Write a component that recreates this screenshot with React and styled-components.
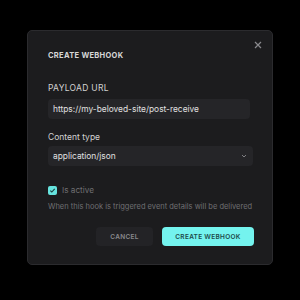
import styled, { createGlobalStyle } from "styled-components";

const Global = createGlobalStyle`
  html, body { margin: 0; padding: 0; background: #000; }
  body { width: 300px; height: 300px; font-family: Inter, "Noto Sans", sans-serif; }
`;

const Screen = styled.div`
  width: 300px;
  height: 300px;
  display: flex;
  justify-content: center;
  padding-top: 30px;
  box-sizing: border-box;
`;

const Dialog = styled.div`
  position: relative;
  width: 246px;
  height: 235px;
  box-sizing: border-box;
  background: #1c1c1e;
  border: 1px solid #2b2b2e;
  border-radius: 5px;
  padding: 20px 20px 0 20px;
  display: flex;
  flex-direction: column;
`;

const Close = styled.button`
  position: absolute;
  top: 9px;
  right: 9px;
  width: 10px;
  height: 10px;
  padding: 0;
  border: none;
  background: none;
  display: flex;
  align-items: center;
  justify-content: center;
`;

const Title = styled.h2`
  margin: 0;
  font-size: 7.5px;
  font-weight: 700;
  letter-spacing: 0.3px;
  color: #d6d6d6;
  text-transform: uppercase;
  line-height: 10px;
`;

const Label = styled.div`
  margin-top: ${(p) => p.$mt}px;
  font-size: 8.5px;
  letter-spacing: ${(p) => (p.$upper ? "0.3px" : "0")};
  color: #d2d2d2;
  line-height: 11px;
`;

const Field = styled.div`
  margin-top: ${(p) => p.$mt}px;
  width: ${(p) => p.$w}px;
  height: 20px;
  box-sizing: border-box;
  background: #252528;
  border-radius: 4px;
  padding: 0 6px 0 5px;
  display: flex;
  align-items: center;
  justify-content: space-between;
  font-size: 8.4px;
  color: #e0e0e0;
`;

const CheckRow = styled.div`
  margin-top: 19px;
  display: flex;
  align-items: center;
  gap: 5px;
  font-size: 8.2px;
  line-height: 11px;
  color: #6f6f72;
`;

const Box = styled.span`
  width: 9px;
  height: 9px;
  border-radius: 2px;
  background: #66e3de;
  display: flex;
  align-items: center;
  justify-content: center;
`;

const Hint = styled.p`
  margin: 5px 0 0;
  font-size: 7.5px;
  color: #6f6f72;
  line-height: 11px;
  white-space: nowrap;
`;

const Actions = styled.div`
  margin-top: 15px;
  width: 206px;
  display: flex;
  justify-content: flex-end;
  gap: 9px;
`;

const Button = styled.button`
  height: 19px;
  width: ${(p) => p.$w}px;
  border: none;
  border-radius: 4px;
  font-family: inherit;
  font-size: 6.5px;
  font-weight: 600;
  letter-spacing: 0.3px;
  text-transform: uppercase;
  background: ${(p) => (p.$primary ? "#74f3ee" : "#232326")};
  color: ${(p) => (p.$primary ? "#1c4a4a" : "#8a8a8d")};
  padding: 0;
`;

export default function App() {
  return (
    <>
      <Global />
      <Screen>
        <Dialog>
          <Close>
            <svg width="8" height="8" viewBox="0 0 8 8">
              <path d="M1 1L7 7M7 1L1 7" stroke="#8a8a8d" strokeWidth="1.2" />
            </svg>
          </Close>
          <Title>Create webhook</Title>
          <Label $upper $mt={22}>PAYLOAD URL</Label>
          <Field $mt={5} $w={202}>https://my-beloved-site/post-receive</Field>
          <Label $mt={13}>Content type</Label>
          <Field $mt={3} $w={205}>
            application/json
            <svg width="6" height="4" viewBox="0 0 6 4">
              <path d="M1 1L3 3L5 1" stroke="#8a8a8d" strokeWidth="0.9" fill="none" />
            </svg>
          </Field>
          <CheckRow>
            <Box>
              <svg width="7" height="7" viewBox="0 0 7 7">
                <path d="M1.3 3.6L2.8 5L5.7 1.8" stroke="#1c3c3c" strokeWidth="1.1" fill="none" />
              </svg>
            </Box>
            Is active
          </CheckRow>
          <Hint>When this hook is triggered event details will be delivered</Hint>
          <Actions>
            <Button $w={57}>Cancel</Button>
            <Button $primary $w={92}>Create webhook</Button>
          </Actions>
        </Dialog>
      </Screen>
    </>
  );
}
